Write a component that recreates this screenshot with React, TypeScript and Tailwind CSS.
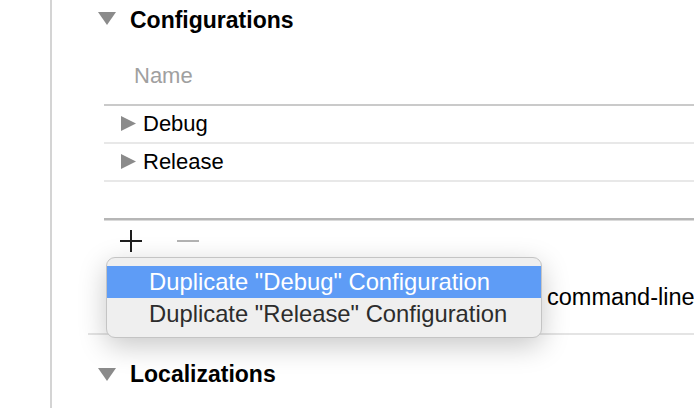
export default function App() {
  return (
    <div className="relative w-[694px] h-[408px] overflow-hidden bg-white text-black font-['Liberation_Sans',Arial,sans-serif]">
      <div className="flex h-full">
        {/* left gutter */}
        <div className="w-[52px] h-full shrink-0 border-r-2 border-[#d4d4d4]" />

        <div className="flex-1 flex flex-col">
          {/* Configurations header */}
          <div className="h-[40px] shrink-0 flex items-start pl-[46px]">
            <div className="mt-[12px]">
              <DownTriangle />
            </div>
            <span className="ml-[14px] mt-[9px] text-[23px] font-bold leading-none">Configurations</span>
          </div>

          {/* table */}
          <div className="ml-[52px] flex flex-col shrink-0">
            <div className="h-[64px] flex items-center pl-[30px] pt-[6px] text-[22px] text-[#a0a0a0]">Name</div>
            <div className="h-[2px] bg-[#cacaca]" />
            {["Debug", "Release"].map((name) => (
              <div key={name} className="h-[38px] flex items-center pl-[17px] pb-[1px] border-b-2 border-[#e8e8e8]">
                <RightTriangle />
                <span className="ml-[7px] text-[22px] leading-none">{name}</span>
              </div>
            ))}
            <div className="h-[36px]" />
            <div className="h-[2px] bg-[#b6b6b6]" />
            <div className="h-[1px] bg-[#dadada]" />
            <div className="h-[40px] flex items-center gap-[35px] pl-[16px]">
              <svg width="22" height="22" viewBox="0 0 22 22">
                <path d="M11 0v22M0 11h22" stroke="#1e1e1e" strokeWidth="2" />
              </svg>
              <svg width="22" height="22" viewBox="0 0 22 22">
                <path d="M0 11h22" stroke="#b3b3b3" strokeWidth="2" />
              </svg>
            </div>
          </div>

          {/* row behind menu */}
          <div className="h-[72px] shrink-0 flex items-center pl-[495px] pt-[2px] text-[23.5px] whitespace-nowrap">
            command-line
          </div>
          <div className="ml-[36px] h-[2px] shrink-0 bg-[#e4e4e4]" />

          {/* Localizations header */}
          <div className="flex items-start pt-[28px] pl-[46px]">
            <div className="mt-[5px]">
              <DownTriangle />
            </div>
            <span className="ml-[14px] text-[23px] font-bold leading-none">Localizations</span>
          </div>
        </div>
      </div>

      {/* popup menu */}
      <div className="absolute left-[106px] top-[257px] w-[436px] h-[81px] rounded-[9px] border border-[#c4c4c4] bg-[#efefef] shadow-[0_8px_28px_rgba(0,0,0,0.22)] py-[8px] text-[23.8px]">
        <div className="h-[32px] flex items-center pl-[42px] bg-[#5e9cf6] text-white">
          Duplicate "Debug" Configuration
        </div>
        <div className="h-[31px] flex items-center pl-[42px] text-[#2c2c2c]">
          Duplicate "Release" Configuration
        </div>
      </div>
    </div>
  );
}

function DownTriangle() {
  return (
    <svg width="18" height="13" viewBox="0 0 18 13" className="shrink-0">
      <path d="M0 0h18L9 13z" fill="#8b8b8b" />
    </svg>
  );
}

function RightTriangle() {
  return (
    <svg width="15" height="15" viewBox="0 0 15 15" className="shrink-0">
      <path d="M0 0L15 7.5L0 15z" fill="#8b8b8b" />
    </svg>
  );
}
